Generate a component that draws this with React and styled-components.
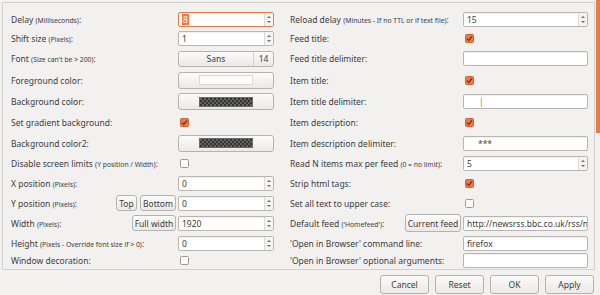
import React from "react";
import styled, { createGlobalStyle } from "styled-components";

const Global = createGlobalStyle`
  html, body {
    margin: 0;
    padding: 0;
    background: #f2f1f0;
  }
`;

const Window = styled.div`
  width: 600px;
  height: 295px;
  overflow: hidden;
  background: #f2f1f0;
  color: #3c3c3c;
  font-family: "Noto Sans", "DejaVu Sans", sans-serif;
  font-size: 8.5px;
  display: flex;
  flex-direction: column;
`;

const Body = styled.div`
  display: flex;
  align-items: flex-start;
`;

const Frame = styled.div`
  margin: 2px 0 0 2px;
  width: 593px;
  height: 268px;
  box-sizing: border-box;
  border: 1px solid #d3cfca;
  padding: 6px 6px 0 8px;
  display: grid;
  grid-auto-flow: column;
  grid-template-columns: 263px 298px;
  grid-template-rows: 20px 19px 21px 22px 21px 21px 20px 21px 19px 20px 20px 20px 15px;
  column-gap: 16px;
`;

const ScrollTrack = styled.div`
  width: 4px;
  margin-left: 1px;
`;

const Thumb = styled.div`
  height: 133px;
  background: #f07746;
`;

const RowBox = styled.div`
  display: flex;
  align-items: center;
  min-width: 0;
`;

const Label = styled.div`
  flex: 1;
  white-space: nowrap;
  overflow: hidden;
`;

const Note = styled.span`
  font-size: 6.8px;
`;

const Extras = styled.div`
  display: flex;
  gap: 3px;
  margin-right: 2px;
`;

const Slot = styled.div`
  width: ${(p) => (p.$side === "r" ? 125 : 96)}px;
  display: flex;
  align-items: center;
`;

const Entry = styled.div`
  box-sizing: border-box;
  flex: 1;
  min-width: 0;
  height: 15px;
  background: #fff;
  border: 1px solid ${(p) => (p.$focus ? "#e47a44" : "#bab5af")};
  border-radius: 2px;
  box-shadow: inset 0 1px 1px rgba(0, 0, 0, 0.06);
  display: flex;
  align-items: center;
  overflow: hidden;
  white-space: nowrap;
`;

const EntryText = styled.div`
  flex: 1;
  min-width: 0;
  padding-left: 3px;
  overflow: hidden;
`;

const Selected = styled.span`
  background: #f07746;
  color: #fff;
  padding: 0 1px;
`;

const Delim = styled.span`
  margin-left: ${(p) => p.$indent}px;
  color: ${(p) => p.$color || "#3c3c3c"};
`;

const Arrows = styled.div`
  width: 8px;
  align-self: stretch;
  border-left: 1px solid #dcd8d3;
  background: #f5f4f3;
  display: flex;
  flex-direction: column;
  align-items: center;
  justify-content: center;
  gap: 3px;
`;

const Tri = styled.span`
  width: 0;
  height: 0;
  border-left: 2px solid transparent;
  border-right: 2px solid transparent;
  ${(p) => (p.$down ? "border-top" : "border-bottom")}: 2px solid #6f6b67;
`;

const PushButton = styled.div`
  box-sizing: border-box;
  width: ${(p) => (p.$w ? `${p.$w}px` : "100%")};
  height: ${(p) => p.$h || 16}px;
  border: 1px solid #b7b2ac;
  border-radius: 3px;
  background: linear-gradient(#fbfbfa, #ebe9e6);
  display: flex;
  align-items: center;
  justify-content: center;
  white-space: nowrap;
`;

const FontName = styled.div`
  flex: 1;
  text-align: center;
`;

const FontSize = styled.div`
  width: 19px;
  align-self: stretch;
  border-left: 1px solid #d6d2cd;
  display: flex;
  align-items: center;
  justify-content: center;
`;

const Swatch = styled.div`
  width: 54px;
  height: 10px;
  box-sizing: border-box;
  border: 1px solid ${(p) => (p.$checker ? "#6a6a6a" : "#dcd8d3")};
  background: ${(p) =>
    p.$checker
      ? "repeating-conic-gradient(#353535 0 25%, #626262 0 50%) 0 0 / 4px 4px"
      : "#fff"};
`;

const Check = styled.div`
  box-sizing: border-box;
  width: 9px;
  height: 9px;
  margin-left: 2px;
  border-radius: 1.5px;
  border: 1px solid ${(p) => (p.$on ? "#d0622f" : "#9e9993")};
  background: ${(p) => (p.$on ? "#f07746" : "#fff")};
  display: flex;
  align-items: center;
  justify-content: center;
`;

const Footer = styled.div`
  display: flex;
  justify-content: flex-end;
  gap: 6px;
  padding: 5px 6px 0 0;
`;

function Row({ label, note, side = "l", extras, children }) {
  return (
    <RowBox>
      <Label>
        {label}
        {note && (
          <>
            {" "}
            <Note>({note})</Note>
          </>
        )}
        :
      </Label>
      {extras && <Extras>{extras}</Extras>}
      <Slot $side={side}>{children}</Slot>
    </RowBox>
  );
}

function Spin({ children, focus }) {
  return (
    <Entry $focus={focus}>
      <EntryText>{children}</EntryText>
      <Arrows>
        <Tri />
        <Tri $down />
      </Arrows>
    </Entry>
  );
}

function Text({ children }) {
  return (
    <Entry>
      <EntryText>{children}</EntryText>
    </Entry>
  );
}

function Box({ on }) {
  return (
    <Check $on={on}>
      {on && (
        <svg width="7" height="7" viewBox="0 0 7 7">
          <path d="M1 3.6 L2.9 5.4 L6 1.4" fill="none" stroke="#5e3520" strokeWidth="1.2" />
        </svg>
      )}
    </Check>
  );
}

export default function App() {
  return (
    <Window>
      <Global />
      <Body>
        <Frame>
          <Row label="Delay" note="Milliseconds">
            <Spin focus>
              <Selected>8</Selected>
            </Spin>
          </Row>
          <Row label="Shift size" note="Pixels">
            <Spin>1</Spin>
          </Row>
          <Row label="Font" note="Size can't be > 200">
            <PushButton>
              <FontName>Sans</FontName>
              <FontSize>14</FontSize>
            </PushButton>
          </Row>
          <Row label="Foreground color">
            <PushButton $h={17}>
              <Swatch />
            </PushButton>
          </Row>
          <Row label="Background color">
            <PushButton $h={17}>
              <Swatch $checker />
            </PushButton>
          </Row>
          <Row label="Set gradient background">
            <Box on />
          </Row>
          <Row label="Background color2">
            <PushButton $h={17}>
              <Swatch $checker />
            </PushButton>
          </Row>
          <Row label="Disable screen limits" note="Y position / Width">
            <Box />
          </Row>
          <Row label="X position" note="Pixels">
            <Spin>0</Spin>
          </Row>
          <Row
            label="Y position"
            note="Pixels"
            extras={
              <>
                <PushButton $w={21}>Top</PushButton>
                <PushButton $w={36}>Bottom</PushButton>
              </>
            }
          >
            <Spin>0</Spin>
          </Row>
          <Row label="Width" note="Pixels" extras={<PushButton $w={44}>Full width</PushButton>}>
            <Spin>1920</Spin>
          </Row>
          <Row label="Height" note="Pixels - Override font size if > 0">
            <Spin>0</Spin>
          </Row>
          <Row label="Window decoration">
            <Box />
          </Row>

          <Row side="r" label="Reload delay" note="Minutes - If no TTL or if text file">
            <Spin>15</Spin>
          </Row>
          <Row side="r" label="Feed title">
            <Box on />
          </Row>
          <Row side="r" label="Feed title delimiter">
            <Text />
          </Row>
          <Row side="r" label="Item title">
            <Box on />
          </Row>
          <Row side="r" label="Item title delimiter">
            <Text>
              <Delim $indent={12} $color="#c8642c">|</Delim>
            </Text>
          </Row>
          <Row side="r" label="Item description">
            <Box on />
          </Row>
          <Row side="r" label="Item description delimiter">
            <Text>
              <Delim $indent={11}>***</Delim>
            </Text>
          </Row>
          <Row side="r" label="Read N items max per feed" note="0 = no limit">
            <Spin>5</Spin>
          </Row>
          <Row side="r" label="Strip html tags">
            <Box on />
          </Row>
          <Row side="r" label="Set all text to upper case">
            <Box />
          </Row>
          <Row
            side="r"
            label="Default feed"
            note="'Homefeed'"
            extras={<PushButton $w={56} $h={18}>Current feed</PushButton>}
          >
            <Text>http://newsrss.bbc.co.uk/rss/n</Text>
          </Row>
          <Row side="r" label="'Open in Browser' command line">
            <Text>firefox</Text>
          </Row>
          <Row side="r" label="'Open in Browser' optional arguments">
            <Text />
          </Row>
        </Frame>
        <ScrollTrack>
          <Thumb />
        </ScrollTrack>
      </Body>
      <Footer>
        <PushButton $w={49} $h={19}>Cancel</PushButton>
        <PushButton $w={49} $h={19}>Reset</PushButton>
        <PushButton $w={49} $h={19}>OK</PushButton>
        <PushButton $w={49} $h={19}>Apply</PushButton>
      </Footer>
    </Window>
  );
}
